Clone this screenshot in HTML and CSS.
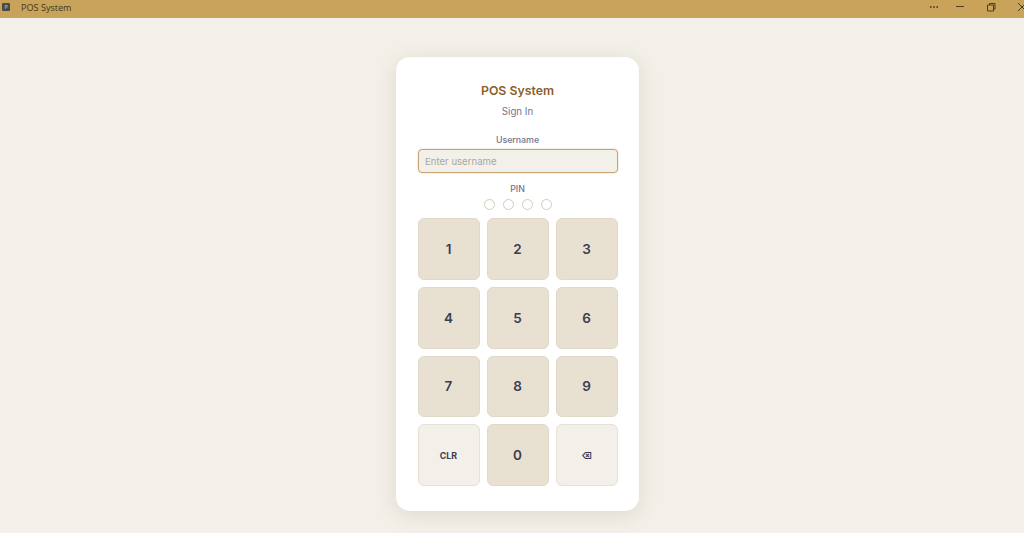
FILE: index.html
```html
<!DOCTYPE html>
<html lang="en">
<head>
<meta charset="utf-8">
<title>POS System</title>
<link rel="stylesheet" href="styles.css">
</head>
<body>
<header class="titlebar">
  <div class="app-id">
    <span class="app-icon">P</span>
    <span class="app-name">POS System</span>
  </div>
  <div class="win-controls">
    <svg class="win-icon" viewBox="0 0 12 12"><rect x="2" y="5.2" width="1.6" height="1.6"/><rect x="5.2" y="5.2" width="1.6" height="1.6"/><rect x="8.4" y="5.2" width="1.6" height="1.6"/></svg>
    <svg class="win-icon" viewBox="0 0 12 12"><path d="M2 5.5h8" class="line"/></svg>
    <svg class="win-icon" viewBox="0 0 12 12"><path d="M2.500 4h6v6h-6zM4.500 4V2.500h5.500V8H8.500" class="line"/></svg>
    <svg class="win-icon" viewBox="0 0 12 12"><path d="M2 2l8 8M10 2l-8 8" class="line"/></svg>
  </div>
</header>
<main class="stage">
  <section class="card">
    <h1 class="title">POS System</h1>
    <p class="subtitle">Sign In</p>
    <label class="label" for="username">Username</label>
    <input class="input" id="username" type="text" placeholder="Enter username">
    <div class="label pin-label">PIN</div>
    <div class="dots"><span class="dot"></span><span class="dot"></span><span class="dot"></span><span class="dot"></span></div>
    <div class="keypad">
      <button class="key">1</button>
      <button class="key">2</button>
      <button class="key">3</button>
      <button class="key">4</button>
      <button class="key">5</button>
      <button class="key">6</button>
      <button class="key">7</button>
      <button class="key">8</button>
      <button class="key">9</button>
      <button class="key key-alt key-small">CLR</button>
      <button class="key">0</button>
      <button class="key key-alt key-small">⌫</button>
    </div>
  </section>
</main>
</body>
</html>
```
FILE: styles.css
```css
* { box-sizing: border-box; }
html, body { margin: 0; height: 100%; }
body {
  display: flex;
  flex-direction: column;
  background: #f3f0e9;
  font-family: Inter, "DejaVu Sans", sans-serif;
  overflow: hidden;
}
.titlebar {
  height: 18px;
  flex: none;
  display: flex;
  align-items: center;
  justify-content: space-between;
  background: #c9a35a;
  padding: 0 0 4px 2px;
}
.app-id { display: flex; align-items: center; gap: 11px; }
.app-icon {
  width: 8px;
  height: 8px;
  background: #4a4a4e;
  border-radius: 1px;
  color: #c9a35a;
  font-size: 5px;
  font-weight: 700;
  line-height: 8px;
  text-align: center;
}
.app-name {
  position: relative;
  top: 1px;
  font-family: "Open Sans", sans-serif;
  font-size: 9.1px;
  color: #3f3620;
  line-height: 14px;
}
.win-controls { display: flex; align-items: center; margin-right: -4px; }
.win-icon { width: 12px; height: 12px; fill: #4b3f22; margin-left: 19px; }
.win-icon:first-child { margin-right: -5px; }
.line { fill: none; stroke: #4b3f22; stroke-width: 1; }
.stage {
  flex: 1;
  display: flex;
  justify-content: center;
  padding: 39px 0 0 11px;
}
.card {
  width: 243px;
  height: 454px;
  background: #fff;
  border-radius: 14px;
  padding: 25px 22px 24px;
  display: flex;
  flex-direction: column;
  align-items: center;
  box-shadow: 0 4px 20px rgba(120, 100, 70, 0.16);
}
.title {
  margin: 0;
  font-size: 12.3px;
  font-weight: 600;
  line-height: 17px;
  color: #8b5e2b;
}
.subtitle {
  margin: 5px 0 0;
  font-size: 9.7px;
  line-height: 15px;
  color: #73738f;
}
.label {
  font-size: 8.800px;
  font-weight: 500;
  line-height: 12px;
  color: #73738f;
}
.subtitle + .label { margin-top: 15px; }
.input {
  width: 200px;
  height: 24px;
  margin-top: 3px;
  padding: 0 6.5px;
  font-family: inherit;
  font-size: 9.6px;
  background: #f3f0e9;
  border: 1.25px solid #c9a273;
  border-radius: 4px;
  box-shadow: 0 0 0 1px rgba(201, 162, 115, 0.15);
  outline: none;
  color: #333;
}
.input::placeholder { color: #a9a79f; opacity: 1; }
.pin-label { margin-top: 10px; }
.dots { display: flex; gap: 8px; margin-top: 3.5px; }
.dot {
  width: 11px;
  height: 11px;
  border: 1.25px solid #d2ceb8;
  border-radius: 50%;
}
.keypad {
  margin-top: 8.5px;
  display: grid;
  grid-template-columns: repeat(3, 62px);
  grid-auto-rows: 61.8px;
  gap: 7px;
}
.key {
  padding: 0;
  background: #e8e1d2;
  border: 1px solid #e0d9ca;
  border-radius: 6px;
  font-family: inherit;
  font-size: 13.500px;
  font-weight: 600;
  color: #3d3d50;
}
.key-alt { background: #f3f0e9; border-color: #e6e1d6; }
.key-small { font-size: 8.800px; font-weight: 700; }
```
